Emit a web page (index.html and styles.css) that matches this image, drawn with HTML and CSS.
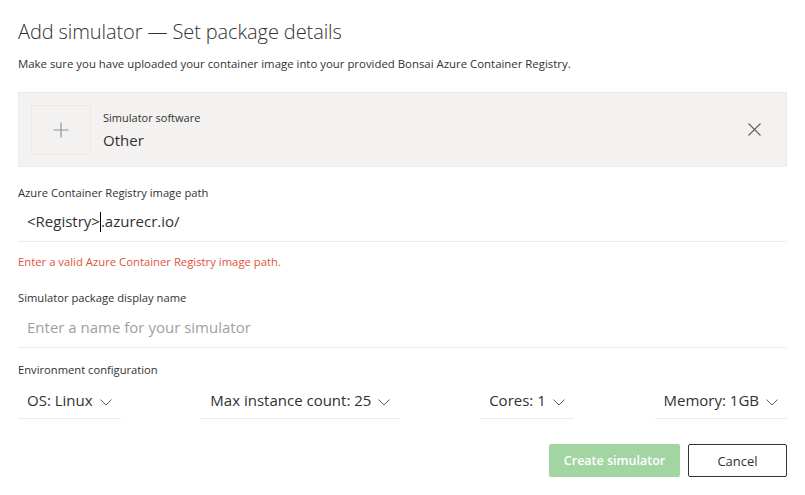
FILE: index.html
```html
<!DOCTYPE html>
<html>
<head>
<meta charset="utf-8">
<link rel="stylesheet" href="styles.css">
</head>
<body>
<div class="dialog">
  <h1 class="title">Add simulator — Set package details</h1>
  <p class="subtitle">Make sure you have uploaded your container image into your provided Bonsai Azure Container Registry.</p>

  <div class="card">
    <div class="card-icon">
      <svg width="16" height="16" viewBox="0 0 16 16"><path d="M8 0.5V15.5M0.5 8H15.5" stroke="#8796a8" stroke-width="1.2" fill="none"/></svg>
    </div>
    <div class="card-text">
      <div class="card-label">Simulator software</div>
      <div class="card-value">Other</div>
    </div>
    <button class="card-close" aria-label="Remove">
      <svg width="13" height="13" viewBox="0 0 13 13"><path d="M0.5 0.5L12.5 12.5M12.5 0.5L0.5 12.5" stroke="#605e5c" stroke-width="1.1" fill="none"/></svg>
    </button>
  </div>

  <div class="field">
    <label class="label">Azure Container Registry image path</label>
    <div class="input"><span>&lt;Registry&gt;</span><span class="caret"></span><span>.azurecr.io/</span></div>
    <div class="error">Enter a valid Azure Container Registry image path.</div>
  </div>

  <div class="field field-name">
    <label class="label">Simulator package display name</label>
    <div class="input placeholder">Enter a name for your simulator</div>
  </div>

  <div class="field field-env">
    <label class="label">Environment configuration</label>
    <div class="dropdowns">
      <div class="dropdown">OS: Linux <span class="chev"><svg width="12" height="7" viewBox="0 0 12 7"><path d="M0.5 0.5L6 6L11.5 0.5" stroke="#605e5c" stroke-width="1" fill="none"/></svg></span></div>
      <div class="dropdown">Max instance count: 25 <span class="chev"><svg width="12" height="7" viewBox="0 0 12 7"><path d="M0.5 0.5L6 6L11.5 0.5" stroke="#605e5c" stroke-width="1" fill="none"/></svg></span></div>
      <div class="dropdown">Cores: 1 <span class="chev"><svg width="12" height="7" viewBox="0 0 12 7"><path d="M0.5 0.5L6 6L11.5 0.5" stroke="#605e5c" stroke-width="1" fill="none"/></svg></span></div>
      <div class="dropdown">Memory: 1GB <span class="chev"><svg width="12" height="7" viewBox="0 0 12 7"><path d="M0.5 0.5L6 6L11.5 0.5" stroke="#605e5c" stroke-width="1" fill="none"/></svg></span></div>
    </div>
  </div>

  <div class="actions">
    <button class="btn btn-primary">Create simulator</button>
    <button class="btn btn-default">Cancel</button>
  </div>
</div>
</body>
</html>
```
FILE: styles.css
```css
* { box-sizing: border-box; }
html, body { margin: 0; padding: 0; background: #fff; }
body {
  font-family: "Open Sans", "Noto Sans", sans-serif;
  color: #323130;
  width: 805px;
  height: 495px;
  overflow: hidden;
}
.dialog {
  padding: 19px 18px 0 18px;
}
.title {
  margin: 0;
  font-size: 20px;
  font-weight: 300;
  line-height: 26px;
  color: #323130;
  letter-spacing: -0.1px;
}
.subtitle {
  margin: 11px 0 0 0;
  font-size: 11.4px;
  line-height: 16px;
  color: #323130;
}
.card {
  margin-top: 20px;
  height: 75px;
  background: #f3f2f1;
  border: 1px solid #ebeae9;
  display: flex;
  align-items: center;
  padding: 0 12px;
}
.card-icon {
  width: 60px;
  height: 50px;
  border: 1px solid #ebeae9;
  display: flex;
  align-items: center;
  justify-content: center;
}
.card-text {
  margin-left: 12px;
  flex: 1;
  display: flex;
  flex-direction: column;
}
.card-label { font-size: 11px; line-height: 16px; }
.card-value { font-size: 15px; line-height: 20px; margin-top: 4px; }
.card-close {
  background: none;
  border: 0;
  padding: 0;
  margin-right: 13px;
  width: 13px;
  height: 13px;
  display: flex;
}
.field { margin-top: 18px; }
.label {
  display: block;
  font-size: 11.2px;
  line-height: 16px;
  margin-bottom: 1px;
  color: #323130;
}
.input {
  height: 40px;
  border-bottom: 1px solid #edebe9;
  padding: 7px 9px 0 9px;
  font-size: 15px;
  line-height: 24px;
  display: flex;
  align-items: flex-start;
}
.caret {
  display: inline-block;
  width: 1px;
  height: 20px;
  background: #000;
  margin-top: 3px;
}
.placeholder { color: #a19f9d; }
.field-name .label { margin-bottom: 2px; }
.error {
  margin-top: 12px;
  font-size: 11.3px;
  line-height: 16px;
  color: #e0533b;
}
.field-name { margin-top: 20px; }
.field-env { margin-top: 14px; }
.dropdowns {
  display: flex;
  justify-content: space-between;
}
.dropdown {
  height: 40px;
  border-bottom: 1px solid #edebe9;
  padding: 9px 9px 0 9px;
  font-size: 15px;
  line-height: 24px;
  white-space: nowrap;
  display: flex;
  align-items: flex-start;
}
.chev { display: inline-flex; margin-left: 7px; margin-top: 11px; }
.actions {
  margin-top: 25px;
  display: flex;
  justify-content: flex-end;
  gap: 8px;
}
.btn {
  height: 33px;
  font-family: inherit;
  font-size: 13px;
  border-radius: 2px;
  padding: 0;
  white-space: nowrap;
}
.btn-primary {
  width: 131px;
  background: #a3d5a3;
  border: 1px solid #a3d5a3;
  color: #fff;
  font-size: 12.5px;
  font-weight: 600;
}
.btn-default {
  width: 99px;
  background: #fff;
  border: 1px solid #333;
  color: #323130;
}
```
